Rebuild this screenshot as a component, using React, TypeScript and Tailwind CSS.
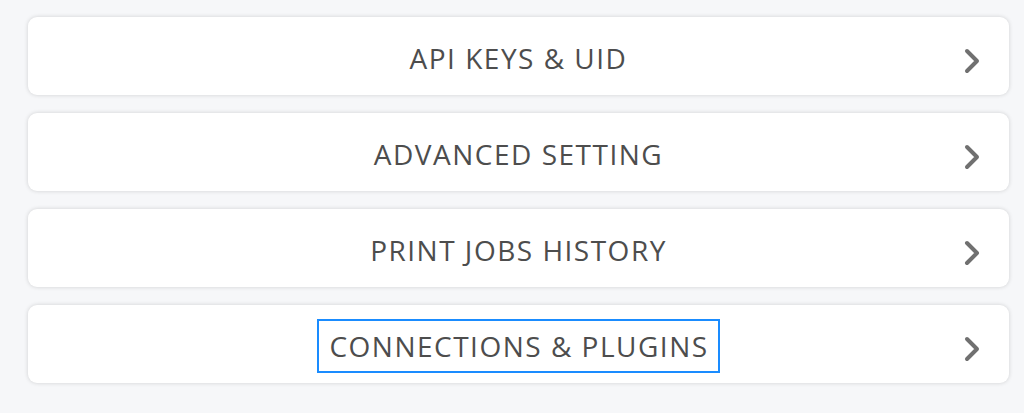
import React from "react";

const items = [
  { label: "API KEYS & UID", focused: false },
  { label: "ADVANCED SETTING", focused: false },
  { label: "PRINT JOBS HISTORY", focused: false },
  { label: "CONNECTIONS & PLUGINS", focused: true },
];

function Chevron() {
  return (
    <svg width="16" height="26" viewBox="0 0 16 26" className="shrink-0">
      <path
        d="M3 3 L13 13 L3 23"
        fill="none"
        stroke="#707070"
        strokeWidth="4"
        strokeLinecap="round"
        strokeLinejoin="round"
      />
    </svg>
  );
}

export default function App() {
  return (
    <div
      className="w-[1024px] h-[413px] bg-[#f6f7f9] pt-[17px] pl-[28px] pr-[15px] flex flex-col gap-[18px]"
      style={{ fontFamily: '"Open Sans", "Liberation Sans", sans-serif' }}
    >
      {items.map((it) => (
        <div
          key={it.label}
          className="relative h-[78px] bg-white rounded-[9px] shadow-[0_0_4px_rgba(0,0,0,0.16)] flex items-center justify-center"
        >
          <span
            className={
              "text-[28px] leading-[32px] text-[#4d4d4d] tracking-[1.5px] mt-[4px] " +
              (it.focused ? "border-2 border-[#1a8cff] pl-[10px] pr-[9px] py-[9px]" : "")
            }
          >
            {it.label}
          </span>
          <div className="absolute right-[29px] top-[44px] -translate-y-1/2 flex">
            <Chevron />
          </div>
        </div>
      ))}
    </div>
  );
}
